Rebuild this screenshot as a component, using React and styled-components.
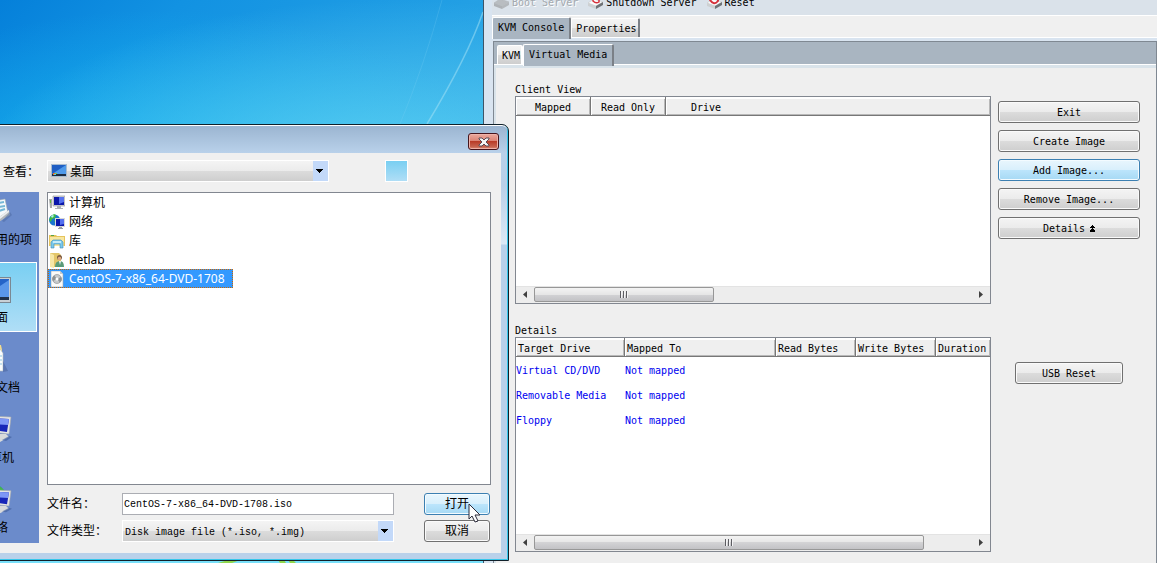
import React from "react";
import styled, { createGlobalStyle, css } from "styled-components";

const MONO = `"DejaVu Sans Mono", "Liberation Mono", "Noto Sans CJK SC", monospace`;
const FIELD_MONO = `"Liberation Mono", "DejaVu Sans Mono", monospace`;
const UI = `"Noto Sans", "Open Sans", "Noto Sans CJK SC", sans-serif`;

const GlobalStyle = createGlobalStyle`
  *, *::before, *::after { box-sizing: border-box; }
  body { margin: 0; overflow: hidden; }
  button, input, select, table { font: inherit; color: inherit; }
`;

const face = css`
  background: linear-gradient(#f4f4f4, #ebebeb 50%, #dcdcdc 50%, #cecece);
`;

const Desktop = styled.div`
  position: relative;
  min-height: 100vh;
  overflow: hidden;
  color: #000;
  font: 10px/13px ${MONO};
  background:
    linear-gradient(transparent 90%, #78dff9 98%),
    radial-gradient(ellipse 420px 190px at 390px 190px, #62d4f3, transparent),
    radial-gradient(ellipse 360px 180px at 160px 190px, #16b4ee, transparent),
    linear-gradient(135deg, #0580da, #1292e2 130px, #229fe4 330px, #34aeea 560px);
`;

const Streaks = styled.svg`
  position: absolute;
  left: 380px;
  top: 0;
`;

const Grass = styled.svg`
  position: absolute;
  left: 210px;
  bottom: 0;
`;

/* ---------- KVM window ---------- */

const KvmWindow = styled.main`
  position: absolute;
  top: -10px;
  left: 483px;
  right: 0;
  bottom: 0;
  display: flex;
  flex-direction: column;
  padding-left: 8px;
  border-left: 1px solid #3d5568;
  background: #d9e4f0;
`;

const Toolbar = styled.div`
  display: flex;
  align-items: center;
  height: 25px;
  gap: 8px;
  background: #dae2ea;
`;

const ToolButton = styled.button`
  display: flex;
  align-items: center;
  gap: 2px;
  padding: 0 0 0 1px;
  border: 0;
  background: none;
  &:disabled { color: #a3a9af; text-shadow: 1px 1px #fff; }
`;

const TabRow = styled.div`
  display: flex;
  align-items: flex-end;
  height: 23px;
  border-top: 1px solid #fff;
  border-bottom: 1px solid #fff;
  background: #f0f0f0;
`;

const InnerTabRow = styled(TabRow)`
  padding-left: 3px;
  border-top: 0;
  background: #a9b5c1;
`;

const Tab = styled.button`
  height: ${(p) => (p.$active ? 22 : 19)}px;
  margin-bottom: ${(p) => (p.$active ? -2 : 0)}px;
  padding: 0 ${(p) => (p.$tight ? 1 : p.$active ? 5 : 2)}px ${(p) => (p.$active ? 2 : 0)}px ${(p) => (p.$active ? 5 : 4)}px;
  border: 1px solid #fff;
  border-right: 2px solid ${(p) => (p.$tight ? "#fff" : "#7b8087")};
  border-bottom: 0;
  border-radius: 2px 2px 0 0;
  white-space: nowrap;
  ${(p) => (p.$active ? "background: #a9b5c1; position: relative;" : face)}
`;

const Panel = styled.section`
  flex: 1;
  display: flex;
  flex-direction: column;
  margin: 3px 0 0 1px;
  border: 1px solid #7f8892;
  border-bottom: 0;
`;

const Page = styled.div`
  flex: 1;
  display: grid;
  grid-template-columns: 1fr 142px;
  grid-template-rows: 221px 1fr;
  gap: 20px 7px;
  padding: 15px 16px 11px 19px;
  border-top: 3px solid #d9e3ea;
  border-left: 2px solid #d9e3ea;
  background: #efefef;
`;

const Group = styled.div`
  display: flex;
  flex-direction: column;
  min-width: 0;
`;

const GroupTitle = styled.h2`
  margin: 0;
  font: inherit;
`;

const Frame = styled.div`
  flex: 1;
  display: flex;
  flex-direction: column;
  justify-content: space-between;
  border: 1px solid #828790;
  background: #fff;
`;

const Table = styled.table`
  width: 100%;
  table-layout: fixed;
  border-collapse: separate;
  border-spacing: 0;
`;

const Head = styled.th`
  width: ${(p) => (p.$width ? `${p.$width}px` : "auto")};
  height: 19px;
  padding: 3px 0 0 ${(p) => p.$indent || 0}px;
  overflow: hidden;
  white-space: nowrap;
  font-weight: normal;
  text-align: ${(p) => p.$align || "left"};
  background: #efefef;
  border-bottom: 1px solid #777;
  border-right: 1px solid #777;
  box-shadow: inset 1px 2px #fff, inset -1px -1px #b8b8b8;
  &:last-child { border-right: 0; }
`;

const Cell = styled.td`
  height: 25px;
  padding: 2px 0 0;
  color: #0000f0;
  white-space: nowrap;
`;

const ScrollTrack = styled.div`
  display: flex;
  align-items: stretch;
  height: 17px;
  padding-bottom: 1px;
  border-top: 1px solid #e3e3e3;
  background: #ededed;
`;

const ScrollArrow = styled.button`
  display: grid;
  place-items: center;
  width: 18px;
  padding: 0;
  border: 0;
  background: none;
`;

const ScrollLane = styled.div`
  flex: 1;
  display: flex;
`;

const Thumb = styled.div`
  display: grid;
  place-items: center;
  width: ${(p) => p.$size}%;
  border: 1px solid #979797;
  border-radius: 2px;
  background: linear-gradient(#f3f3f3, #e6e6e6 50%, #d3d3d5 50%, #c2c2c5);
`;

const Actions = styled.div`
  display: flex;
  flex-direction: column;
  align-items: center;
  gap: 7px;
  padding-top: ${(p) => p.$offset}px;
`;

const Button = styled.button`
  display: flex;
  align-items: center;
  justify-content: center;
  gap: 5px;
  width: ${(p) => (p.$width ? `${p.$width}px` : "100%")};
  height: 22px;
  padding: 0;
  border: 1px solid #707070;
  border-radius: 3px;
  box-shadow: inset 0 0 0 1px #fafafa;
  ${face}
  ${(p) => p.$hot && css`
    border-color: #3c7fb1;
    box-shadow: inset 0 0 0 1px #f3fbff;
    background: linear-gradient(#e9f6fd, #d8effc 50%, #bce5fc 50%, #a6d9f4);
  `}
`;

/* ---------- Open dialog ---------- */

const Dialog = styled.section`
  position: absolute;
  top: 124px;
  left: -59px;
  width: 568px;
  padding: 0 7px 7px;
  border: 1px solid #10202a;
  border-radius: 7px 7px 0 0;
  box-shadow: inset -1px -1px #35c6ea, inset 0 1px #fff;
  background: linear-gradient(#9ab4d0, #b9d1ea 28px, #b9cfe8 60px, #dce9f6 119px, #b9d1ea 120px);
  font: 12px/16px ${UI};
`;

const TitleBar = styled.header`
  display: flex;
  justify-content: flex-end;
  height: 28px;
  padding: 8px 2px 0 0;
`;

const CloseButton = styled.button`
  display: grid;
  place-items: center;
  width: 31px;
  height: 17px;
  padding: 0;
  border: 1px solid #46151c;
  border-radius: 3px;
  box-shadow: inset 0 0 0 1px #eeb2a9;
  background: linear-gradient(#eba99d, #db8476 45%, #b93c28 50%, #c7634f 85%, #dc8f75);
`;

const DialogBody = styled.div`
  display: grid;
  grid-template-columns: 86px 1fr;
  grid-template-rows: 22px 351px;
  gap: 10px 8px;
  padding: 7px 10px 10px 4px;
  background: #f0f0f0;
`;

const LookLabel = styled.label`
  text-align: right;
  line-height: 24px;
`;

const LookRow = styled.div`
  display: flex;
  gap: 56px;
`;

const NavButton = styled.button`
  width: 23px;
  height: 22px;
  border: 1px solid #fff;
  background: linear-gradient(#79cff2, #b0def6);
`;

const SelectBox = styled.div`
  position: relative;
  width: ${(p) => p.$width}px;
  height: 22px;
`;

const Select = styled.select`
  appearance: none;
  width: 100%;
  height: 22px;
  padding: 1px 18px 0 ${(p) => p.$indent}px;
  border: 1px solid #fff;
  border-radius: 0;
  outline: 0;
  ${face}
`;

const SelectIcon = styled.span`
  position: absolute;
  left: 4px;
  top: 4px;
  display: flex;
  pointer-events: none;
`;

const SelectArrow = styled.span`
  position: absolute;
  top: 1px;
  right: 1px;
  bottom: 1px;
  display: grid;
  place-items: center;
  width: 15px;
  padding: 0 2px 0 0;
  background: #c3d9f9;
  pointer-events: none;
`;

const Places = styled.nav`
  display: flex;
  flex-direction: column;
  background: #6b8bcb;
`;

const Place = styled.button`
  display: flex;
  flex-direction: column;
  align-items: center;
  justify-content: flex-end;
  gap: 6px;
  height: 70px;
  margin: 0 2px;
  padding: 0 0 5px;
  border: 1px solid ${(p) => (p.$active ? "#fff" : "transparent")};
  line-height: 16px;
  white-space: nowrap;
  background: ${(p) => (p.$active ? "linear-gradient(#79cff2, #b0def6)" : "none")};
  &:first-child { height: 62px; margin-bottom: 8px; }
`;

const Main = styled.div`
  display: flex;
  flex-direction: column;
  gap: 8px;
`;

const FileList = styled.ul`
  flex: 1;
  display: flex;
  flex-direction: column;
  align-items: flex-start;
  margin: 0;
  padding: 0;
  border: 1px solid #828790;
  list-style: none;
  background: #fff;
`;

const FileItem = styled.li`
  display: flex;
  align-items: center;
  gap: 4px;
  height: 19px;
  padding: 0 1px;
  white-space: nowrap;
  ${(p) => p.$selected && css`
    padding-right: 8px;
    color: #fff;
    background: #3399ff;
    outline: 1px dotted #cc6600;
    outline-offset: -1px;
  `}
`;

const Form = styled.form`
  display: grid;
  grid-template-columns: 75px 272px 1fr;
  grid-template-rows: 22px 22px;
  row-gap: 5px;
  height: 50px;
  & > button { justify-self: end; margin-right: 1px; }
`;

const FieldLabel = styled.label`
  line-height: 22px;
`;

const TextBox = styled.input`
  width: 100%;
  height: 22px;
  padding: 0 1px;
  border: 1px solid #abadb3;
  border-radius: 0;
  outline: 0;
  background: #fff;
  font: 10px/18px ${FIELD_MONO};
`;

const TypeSelect = styled(Select)`
  padding-top: 4px;
  font: 10px/16px ${FIELD_MONO};
`;

const Cursor = styled.svg`
  position: absolute;
  left: 468px;
  top: 503px;
  pointer-events: none;
`;

/* ---------- drawings ---------- */

const ServerIcon = ({ mark, muted }) => (
  <svg width="17" height="14" viewBox="0 0 17 14">
    <path d="M1 7l6-4 9 3-7 4z" fill={muted ? "#b9bdc1" : "#fbfbfb"} stroke={muted ? "#b4b8bc" : "#c4c7ca"} strokeWidth=".6" />
    <path d="M1 7v3l8 3v-3z" fill={muted ? "#aeb2b6" : "#cdd0d2"} />
    <path d="M9 10l7-4v3l-7 4z" fill={muted ? "#b4b8bc" : "#6e7276"} />
    {mark === "down" && <path d="M6 3v2q3 3 6 1V3M9 0v4" fill="none" stroke="#d5303a" strokeWidth="1.500" />}
    {mark === "reset" && <path d="M4 2v2q4 6 8 1V2" fill="none" stroke="#d5303a" strokeWidth="2" />}
  </svg>
);

const Caret = () => (
  <svg width="7" height="4"><path d="M0 0h7v1H6v1H5v1H4v1H3V3H2V2H1V1H0z" /></svg>
);

const Arrow = ({ right }) => (
  <svg width="4" height="7">
    <path d={right ? "M0 0l4 3.500-4 3.500z" : "M4 0L0 3.500 4 7z"} fill="#404040" />
  </svg>
);

const Grip = () => (
  <svg width="9" height="7">
    <path d="M1.500 0v7M4.500 0v7M7.500 0v7" stroke="#5d5d62" />
    <path d="M2.500 0v7M5.500 0v7M8.500 0v7" stroke="#f3f3f5" />
  </svg>
);

const DoubleUp = () => (
  <svg width="5" height="7" shapeRendering="crispEdges">
    <path d="M2 0h1v1h1v1h1v1H0V2h1V1h1zM2 3h1v1h1v1h1v1H0V5h1V4h1zM0 6h5v1H0z" />
  </svg>
);

const DesktopIcon = () => (
  <svg width="16" height="13" viewBox="0 0 16 13">
    <rect width="16" height="13" fill="#a9bcd0" />
    <rect x="1" y="1" width="14" height="9" fill="#205fc4" />
    <path d="M1 10L15 1v9z" fill="#4f9aea" />
    <rect x="1" y="10" width="14" height="2" fill="#1d2c40" />
    <path d="M2 9h2v2H2z" fill="#e96e2c" />
    <path d="M4 9h2v1H4z" fill="#84c643" />
    <path d="M3 10h2v1H3z" fill="#4ad0f4" />
  </svg>
);

const ComputerIcon = () => (
  <svg width="16" height="16" viewBox="0 0 16 16">
    <path d="M0 4h3v9H1z" fill="#a7aaa9" />
    <path d="M1 5h1v3H1z" fill="#69b944" />
    <path d="M4 1h12v10H4z" fill="#d8d8d6" stroke="#8e9298" strokeWidth=".6" />
    <path d="M5 2h10v8H5z" fill="#0b17aa" />
    <path d="M10 2h5v5l-5 2z" fill="#5571ef" />
    <path d="M8 11h4v2h2v1H6v-1h2z" fill="#aeb2b6" />
  </svg>
);

const NetworkIcon = () => (
  <svg width="16" height="16" viewBox="0 0 16 16">
    <circle cx="5.500" cy="6" r="5.500" fill="#1976cf" />
    <path d="M2 2q3-3 5-1l-1 3-3 1-1 3-2-2zM7 4l3 1-2 3-3-1z" fill="#42bd3f" />
    <path d="M2 2l2-1 1 1-2 2z" fill="#b6f0ec" />
    <path d="M6 4h10v9H6z" fill="#d8d8d6" />
    <path d="M7 5h8v7H7z" fill="#0b17aa" />
    <path d="M11 5h4v5l-4 1z" fill="#5571ef" />
    <path d="M10 13h3v1h1v1H9v-1h1z" fill="#9ba0a5" />
  </svg>
);

const LibraryIcon = () => (
  <svg width="16" height="16" viewBox="0 0 16 16">
    <path d="M0 2h7l1 1h8v10H0z" fill="#e6c45c" />
    <path d="M1 4h14v9H1z" fill="#f7e6a0" />
    <path d="M2 2h3v1H2z" fill="#58a345" />
    <path d="M2 15V9l2-2h8l2 2v6h-3v-4H5v4z" fill="#7cc9ea" stroke="#3c8cba" strokeWidth=".6" />
    <path d="M4 8h8v2H4z" fill="#c4ebfa" />
  </svg>
);

const UserFolderIcon = () => (
  <svg width="16" height="16" viewBox="0 0 16 16">
    <path d="M1 1h9l2 2v12H1z" fill="#e3c669" />
    <path d="M1 1l4 2v13l-4-1z" fill="#f7e7a7" />
    <circle cx="10.500" cy="5.500" r="2.500" fill="#7b5b42" />
    <circle cx="10.500" cy="6.500" r="1.800" fill="#e0ab80" />
    <path d="M6 15q0-6 5-6 4 0 4 6z" fill="#5a9b78" />
    <path d="M10 9h2l-1 4z" fill="#f5f5f5" />
  </svg>
);

const DiscFileIcon = () => (
  <svg width="16" height="16" viewBox="0 0 16 16">
    <path d="M2 0h9l3 3v13H2z" fill="#fbfbfa" stroke="#a3a6a9" strokeWidth=".6" />
    <path d="M11 0v3h3z" fill="#c9ccce" />
    <circle cx="8" cy="8" r="4.500" fill="#c6c9cb" stroke="#868a8d" strokeWidth=".6" />
    <path d="M8 8L5 4.500A4.500 4.500 0 0 0 4 10zM8 8l3 3.500A4.500 4.500 0 0 0 12 6z" fill="#8d9294" />
    <circle cx="8" cy="8" r="1.500" fill="#fff" />
  </svg>
);

const RecentIcon = () => (
  <svg width="32" height="28" viewBox="0 0 32 28">
    <path d="M8 4l17-3 3 14-13 6z" fill="#f6f9fb" stroke="#a0acb6" strokeWidth=".6" />
    <path d="M18 5l6-1M18 9l7-1M19 13l6-2" stroke="#75b7d6" strokeWidth="2" />
    <path d="M2 17l12 6 15-11 1 5-16 10L2 22z" fill="#b3b8bc" />
    <path d="M14 23l15-11v2L15 25z" fill="#eceeef" />
    <path d="M30 14l2 3-8 7-2-1z" fill="#4c68a0" opacity=".5" />
  </svg>
);

const BigDesktopIcon = () => (
  <svg width="30" height="27" viewBox="0 0 30 27">
    <rect x=".5" y=".5" width="29" height="25" fill="#c8d0d6" stroke="#7b8893" />
    <rect x="2" y="2" width="26" height="18" fill="#2564c8" />
    <path d="M2 20L28 3v17z" fill="#5a97ea" />
    <rect x="2" y="20" width="26" height="3" fill="#203149" />
  </svg>
);

const DocumentsIcon = () => (
  <svg width="32" height="30" viewBox="0 0 32 30">
    <path d="M3 1h18l1 5v21H5z" fill="#f2dc8c" />
    <path d="M6 5h14l3 4v18H6z" fill="#fafcfd" stroke="#b0b8c0" strokeWidth=".6" />
    <path d="M9 12h13M9 16h13M9 20h13" stroke="#8fc6e0" />
    <path d="M23 17l5 10-5 1z" fill="#4c68a0" opacity=".6" />
  </svg>
);

const Monitor = () => (
  <>
    <path d="M10 2l21 1-2 17-19-2z" fill="#e3e5e4" stroke="#a4a8ac" strokeWidth=".6" />
    <path d="M12 4l17 1-2 13-15-2z" fill="#1726b8" />
    <path d="M12 4l17 1-1 6-16-1z" fill="#7d97f6" />
    <path d="M12 20h14l3 3-9 5-9-3z" fill="#d8dadb" />
    <path d="M29 22l3 1-6 4-4-1z" fill="#3e5c9a" opacity=".6" />
  </>
);

const BigComputerIcon = () => (
  <svg width="32" height="30" viewBox="0 0 32 30"><Monitor /></svg>
);

const BigNetworkIcon = () => (
  <svg width="32" height="30" viewBox="0 0 32 30">
    <circle cx="15" cy="11" r="10" fill="#2383d0" />
    <path d="M14 0l7 3 5 5-10 1z" fill="#45b64a" />
    <g transform="translate(0 4) scale(1 .9)"><Monitor /></g>
  </svg>
);

/* ---------- data ---------- */

const detailColumns = [
  ["Target Drive", 109],
  ["Mapped To", 151],
  ["Read Bytes", 80],
  ["Write Bytes", 80],
  ["Duration", 0],
];
const drives = ["Virtual CD/DVD", "Removable Media", "Floppy"];

const places = [
  ["最近使用的项", RecentIcon],
  ["桌面", BigDesktopIcon],
  ["我的文档", DocumentsIcon],
  ["计算机", BigComputerIcon],
  ["网络", BigNetworkIcon],
];

const files = [
  ["计算机", ComputerIcon],
  ["网络", NetworkIcon],
  ["库", LibraryIcon],
  ["netlab", UserFolderIcon],
  ["CentOS-7-x86_64-DVD-1708", DiscFileIcon],
];

const ScrollBar = ({ size }) => (
  <ScrollTrack>
    <ScrollArrow type="button" aria-label="Scroll left"><Arrow /></ScrollArrow>
    <ScrollLane><Thumb $size={size}><Grip /></Thumb></ScrollLane>
    <ScrollArrow type="button" aria-label="Scroll right"><Arrow right /></ScrollArrow>
  </ScrollTrack>
);

const Kvm = () => (
  <KvmWindow>
    <Toolbar>
      <ToolButton disabled><ServerIcon mark="boot" muted />Boot Server</ToolButton>
      <ToolButton><ServerIcon mark="down" />Shutdown Server</ToolButton>
      <ToolButton><ServerIcon mark="reset" />Reset</ToolButton>
    </Toolbar>
    <TabRow>
      <Tab $active>KVM Console</Tab>
      <Tab>Properties</Tab>
    </TabRow>
    <Panel>
      <InnerTabRow>
        <Tab $tight>KVM</Tab>
        <Tab $active>Virtual Media</Tab>
      </InnerTabRow>
      <Page>
        <Group>
          <GroupTitle>Client View</GroupTitle>
          <Frame>
            <Table>
              <thead>
                <tr>
                  <Head $width={75} $align="center">Mapped</Head>
                  <Head $width={75} $align="center">Read Only</Head>
                  <Head $indent={25}>Drive</Head>
                </tr>
              </thead>
            </Table>
            <ScrollBar size={41} />
          </Frame>
        </Group>
        <Actions $offset={18}>
          <Button>Exit</Button>
          <Button>Create Image</Button>
          <Button $hot>Add Image...</Button>
          <Button>Remove Image...</Button>
          <Button>Details<DoubleUp /></Button>
        </Actions>
        <Group>
          <GroupTitle>Details</GroupTitle>
          <Frame>
            <Table>
              <thead>
                <tr>
                  {detailColumns.map(([name, width]) => (
                    <Head key={name} $width={width} $indent={2}>{name}</Head>
                  ))}
                </tr>
              </thead>
              <tbody>
                {drives.map((drive) => (
                  <tr key={drive}>
                    <Cell>{drive}</Cell>
                    <Cell>Not mapped</Cell>
                    <Cell /><Cell /><Cell />
                  </tr>
                ))}
              </tbody>
            </Table>
            <ScrollBar size={89} />
          </Frame>
        </Group>
        <Actions $offset={38}>
          <Button $width={108}>USB Reset</Button>
        </Actions>
      </Page>
    </Panel>
  </KvmWindow>
);

const OpenDialog = () => (
  <Dialog role="dialog">
    <TitleBar>
      <CloseButton aria-label="Close">
        <svg width="12" height="10" viewBox="0 0 12 10">
          <path d="M1 1h3l2 2 2-2h3v1L8 5l3 3v1H8L6 7 4 9H1V8l3-3-3-3z" fill="#f6f6f6" stroke="#5a4b55" />
        </svg>
      </CloseButton>
    </TitleBar>
    <DialogBody>
      <LookLabel htmlFor="look">查看：</LookLabel>
      <LookRow>
        <SelectBox $width={282}>
          <Select id="look" $indent={22}><option>桌面</option></Select>
          <SelectIcon><DesktopIcon /></SelectIcon>
          <SelectArrow><Caret /></SelectArrow>
        </SelectBox>
        <NavButton aria-label="Up" />
      </LookRow>
      <Places>
        {places.map(([name, Icon], i) => (
          <Place key={name} $active={i === 1}><Icon />{name}</Place>
        ))}
      </Places>
      <Main>
        <FileList role="listbox">
          {files.map(([name, Icon], i) => (
            <FileItem key={name} role="option" aria-selected={i === 4} $selected={i === 4}>
              <Icon />{name}
            </FileItem>
          ))}
        </FileList>
        <Form onSubmit={(e) => e.preventDefault()}>
          <FieldLabel htmlFor="name">文件名：</FieldLabel>
          <TextBox id="name" defaultValue="CentOS-7-x86_64-DVD-1708.iso" />
          <Button $hot $width={66}>打开</Button>
          <FieldLabel htmlFor="type">文件类型：</FieldLabel>
          <SelectBox $width={272}>
            <TypeSelect id="type" $indent={2}><option>Disk image file (*.iso, *.img)</option></TypeSelect>
            <SelectArrow><Caret /></SelectArrow>
          </SelectBox>
          <Button type="button" $width={66}>取消</Button>
        </Form>
      </Main>
    </DialogBody>
  </Dialog>
);

export default function App() {
  return (
    <>
      <GlobalStyle />
      <Desktop>
        <Streaks width="104" height="124">
          <path d="M103 12Q88 56 47 124" fill="none" stroke="#a8e3f6" strokeWidth="1.500" opacity=".5" />
          <path d="M62 0Q44 66 20 124" fill="none" stroke="#8ad6f4" opacity=".2" />
        </Streaks>
        <Grass width="90" height="3">
          <path d="M8 3l10-3h12l-8 3zM68 0h6l2 3h-6zM78 0h5l3 3h-6z" fill="#8fd64c" />
        </Grass>
        <Kvm />
        <OpenDialog />
        <Cursor width="14" height="20" viewBox="0 0 14 20">
          <path d="M1 1v15l3-3 3 6 3-1-3-6h5z" fill="#fff" stroke="#2b2b3b" />
        </Cursor>
      </Desktop>
    </>
  );
}
